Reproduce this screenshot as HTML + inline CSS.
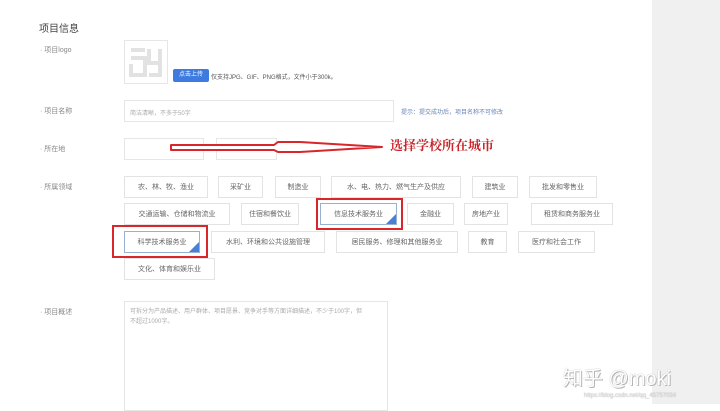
<!DOCTYPE html>
<html><head><meta charset="utf-8"><style>
*{margin:0;padding:0;box-sizing:border-box}
body{width:720px;height:404px;overflow:hidden;background:#fff;position:relative;font-family:"Liberation Sans","Noto Sans CJK SC",sans-serif;color:#666}
.a{position:absolute;white-space:nowrap}
.lbl{font-size:7px;color:#888}
.b{position:absolute;border:1px solid #e6e6e6;background:#fff}
.t{position:absolute;border:1px solid #e3e3e3;background:#fff;font-size:7px;color:#666;display:flex;align-items:center;justify-content:center;white-space:nowrap}
.sel{border-color:#9ab0d0}
.sel:after{content:"";position:absolute;right:0;bottom:0;border-left:10px solid transparent;border-bottom:10px solid #4a7fd6}
.r{position:absolute;border:2px solid #d8262b}
</style></head><body>
<div style="position:absolute;left:652px;top:0;width:68px;height:404px;background:#f0f0f0"></div>
<div class="a" style="left:39px;top:20px;font-size:10px;color:#444">项目信息</div>
<div class="a lbl" style="left:40px;top:45px">· 项目logo</div>
<div class="a lbl" style="left:40px;top:106px">· 项目名称</div>
<div class="a lbl" style="left:40px;top:144px">· 所在地</div>
<div class="a lbl" style="left:40px;top:182px">· 所属领域</div>
<div class="a lbl" style="left:40px;top:307px">· 项目概述</div>

<div class="b" style="left:124px;top:40px;width:44px;height:44px">
<svg width="42" height="42" viewBox="0 0 42 42"><g fill="none" stroke="#e2e2e2" stroke-width="4"><path d="M6 9H20M6 17H20V34H6V23M24 8V22H35M35 8V34H24"/></g></svg></div>
<div class="a" style="left:173px;top:69px;width:36px;height:13px;background:#3d7be0;border-radius:2px;color:#fff;font-size:6px;text-align:center;line-height:13px">点击上传</div>
<div class="a" style="left:211px;top:72px;font-size:6px;color:#555">仅支持JPG、GIF、PNG格式，文件小于300k。</div>

<div class="b" style="left:124px;top:100px;width:270px;height:22px"></div>
<div class="a" style="left:130px;top:108px;font-size:6px;color:#aaa">简洁清晰，不多于50字</div>
<div class="a" style="left:401px;top:107px;font-size:6px;color:#6a86b8">提示：提交成功后，项目名称不可修改</div>

<div class="b" style="left:124px;top:138px;width:80px;height:22px"></div>
<div class="b" style="left:216px;top:138px;width:61px;height:22px"></div>
<svg class="a" style="left:166px;top:138px" width="220" height="20" viewBox="166 138 220 20"><path d="M171 145H274L278 142H300L382 147L300 152H278L274 150H171Z" fill="#fff" stroke="#d8262b" stroke-width="2" stroke-linejoin="round"/></svg>
<div class="a" style="left:390px;top:135px;font-size:13px;font-weight:bold;color:#c8242a;font-family:'Liberation Serif','Noto Serif CJK SC',serif">选择学校所在城市</div>

<div class="t" style="left:124px;top:176px;width:84px;height:22px">农、林、牧、渔业</div>
<div class="t" style="left:218px;top:176px;width:45px;height:22px">采矿业</div>
<div class="t" style="left:275px;top:176px;width:46px;height:22px">制造业</div>
<div class="t" style="left:331px;top:176px;width:130px;height:22px">水、电、热力、燃气生产及供应</div>
<div class="t" style="left:472px;top:176px;width:46px;height:22px">建筑业</div>
<div class="t" style="left:529px;top:176px;width:68px;height:22px">批发和零售业</div>

<div class="t" style="left:124px;top:203px;width:106px;height:22px">交通运输、仓储和物流业</div>
<div class="t" style="left:241px;top:203px;width:58px;height:22px">住宿和餐饮业</div>
<div class="t sel" style="left:320px;top:203px;width:77px;height:22px">信息技术服务业</div>
<div class="t" style="left:407px;top:203px;width:47px;height:22px">金融业</div>
<div class="t" style="left:464px;top:203px;width:44px;height:22px">房地产业</div>
<div class="t" style="left:531px;top:203px;width:82px;height:22px">租赁和商务服务业</div>

<div class="t sel" style="left:124px;top:231px;width:76px;height:22px">科学技术服务业</div>
<div class="t" style="left:211px;top:231px;width:114px;height:22px">水利、环境和公共设施管理</div>
<div class="t" style="left:336px;top:231px;width:122px;height:22px">居民服务、修理和其他服务业</div>
<div class="t" style="left:468px;top:231px;width:39px;height:22px">教育</div>
<div class="t" style="left:518px;top:231px;width:77px;height:22px">医疗和社会工作</div>

<div class="t" style="left:124px;top:258px;width:91px;height:22px">文化、体育和娱乐业</div>

<div class="r" style="left:316px;top:198px;width:87px;height:32px"></div>
<div class="r" style="left:112px;top:225px;width:96px;height:33px"></div>

<div class="b" style="left:124px;top:301px;width:264px;height:110px"></div>
<div class="a" style="left:130px;top:307px;font-size:6px;color:#aaa;line-height:10px">可拆分为产品描述、用户群体、项目愿景、竞争对手等方面详细描述，不少于100字，但<br>不超过1000字。</div>

<div class="a" style="left:563px;top:362px;font-size:20px;color:#fff;text-shadow:0 0 1px #999,1px 1px 0 #bbb">知乎 @moki</div>
<div class="a" style="left:584px;top:393px;font-size:6px;color:#ddd;text-shadow:0 0 1px #aaa">https://blog.csdn.net/qq_45757034</div>
</body></html>
